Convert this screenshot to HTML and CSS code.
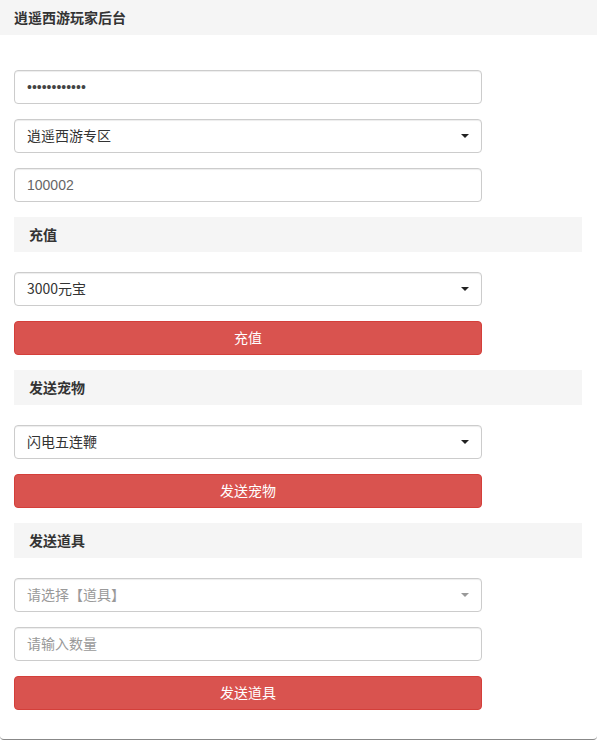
FILE: index.html
```html
<!DOCTYPE html>
<html lang="zh">
<head>
<meta charset="utf-8">
<title>逍遥西游玩家后台</title>
<link rel="stylesheet" href="styles.css">
</head>
<body>
<div class="panel">
  <div class="panel-heading">逍遥西游玩家后台</div>
  <div class="panel-body">
    <div class="field"><div class="control dots">••••••••••••</div></div>
    <div class="field"><div class="control select">逍遥西游专区<span class="caret"></span></div></div>
    <div class="field"><div class="control muted">100002</div></div>

    <div class="section">充值</div>
    <div class="field"><div class="control select">3000元宝<span class="caret"></span></div></div>
    <div class="field"><div class="btn">充值</div></div>

    <div class="section">发送宠物</div>
    <div class="field"><div class="control select">闪电五连鞭<span class="caret"></span></div></div>
    <div class="field"><div class="btn">发送宠物</div></div>

    <div class="section">发送道具</div>
    <div class="field"><div class="control select placeholder">请选择【道具】<span class="caret light"></span></div></div>
    <div class="field"><div class="control placeholder">请输入数量</div></div>
    <div class="field"><div class="btn">发送道具</div></div>
  </div>
</div>
</body>
</html>
```

FILE: styles.css
```css
* { box-sizing: border-box; }
html, body {
  margin: 0;
  padding: 0;
  background: #fff;
}
body {
  font-family: "Noto Sans CJK SC", "Liberation Sans", sans-serif;
  font-size: 14px;
  color: #333;
}
.panel {
  height: 740px;
  border-bottom: 1px solid #888;
  border-radius: 0 0 4px 4px;
  background: #fff;
}
.panel-heading {
  height: 35px;
  background: #f5f5f5;
  padding: 0 14px;
  line-height: 34px;
  font-size: 14px;
  font-weight: bold;
  color: #333;
}
.panel-body {
  padding: 35px 15px 0 14px;
}
.field {
  width: 468px;
  margin-bottom: 15px;
}
.control {
  height: 34px;
  border: 1px solid #ccc;
  border-radius: 4px;
  box-shadow: inset 0 1px 1px rgba(0,0,0,.075);
  padding: 0 12px;
  line-height: 31px;
  color: #555;
  font-size: 14px;
  position: relative;
}
.control.dots {
  font-family: "Liberation Sans", sans-serif;
  font-size: 14px;
  line-height: 32px;
  color: #444;
}
.control.select { color: #333; }
.control.muted { color: #666; font-family: "Liberation Sans", "Noto Sans CJK SC", sans-serif; line-height: 32px; }
.control.placeholder { color: #999; }
.caret {
  position: absolute;
  right: 12px;
  top: 14px;
  width: 0;
  height: 0;
  border-left: 4px solid transparent;
  border-right: 4px solid transparent;
  border-top: 4px solid #222;
}
.caret.light { border-top-color: #999; }
.section {
  width: 568px;
  height: 35px;
  line-height: 34px;
  background: #f5f5f5;
  padding: 0 15px;
  font-weight: bold;
  color: #333;
  margin-bottom: 20px;
}
.btn {
  height: 34px;
  line-height: 31px;
  background: #d9534f;
  border: 1px solid #d43f3a;
  border-radius: 4px;
  color: #fff;
  text-align: center;
  font-size: 14px;
}
```
